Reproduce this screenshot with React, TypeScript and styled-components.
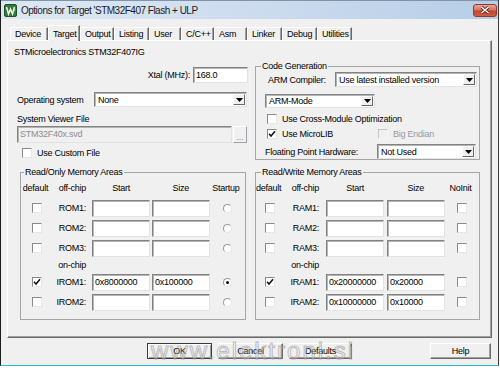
import React from 'react';
import styled, { createGlobalStyle } from 'styled-components';

const GlobalStyle = createGlobalStyle`
  html, body {
    margin: 0;
    padding: 0;
    background: #fff;
  }
  body {
    font-family: "Liberation Sans", Arial, sans-serif;
    font-size: 9px;
    letter-spacing: -0.25px;
    color: #000;
  }
`;

type MemRowData = {
  label: string;
  checked?: boolean;
  start?: string;
  size?: string;
  on?: boolean;
};

const romRows: MemRowData[] = [
  { label: 'ROM1:' },
  { label: 'ROM2:' },
  { label: 'ROM3:' },
];
const iromRows: MemRowData[] = [
  { label: 'IROM1:', checked: true, start: '0x8000000', size: '0x100000', on: true },
  { label: 'IROM2:' },
];
const ramRows: MemRowData[] = [
  { label: 'RAM1:' },
  { label: 'RAM2:' },
  { label: 'RAM3:' },
];
const iramRows: MemRowData[] = [
  { label: 'IRAM1:', checked: true, start: '0x20000000', size: '0x20000' },
  { label: 'IRAM2:', start: '0x10000000', size: '0x10000' },
];

const tabs = [
  { name: 'Device', w: 38 },
  { name: 'Target', w: 32, active: true },
  { name: 'Output', w: 34 },
  { name: 'Listing', w: 35 },
  { name: 'User', w: 32 },
  { name: 'C/C++', w: 33 },
  { name: 'Asm', w: 33 },
  { name: 'Linker', w: 35 },
  { name: 'Debug', w: 35 },
  { name: 'Utilities', w: 35 },
];

const CheckBox: React.FC<{ checked?: boolean; disabled?: boolean }> = ({ checked, disabled }) => (
  <Box $disabled={disabled}>
    {checked && (
      <svg width="8" height="8" viewBox="0 0 8 8">
        <path d="M1 3.8 L3 6 L7 1.2" stroke="#111" strokeWidth="1.5" fill="none" />
      </svg>
    )}
  </Box>
);

const Combo: React.FC<{ w: number; h?: number; value: string }> = ({ w, h, value }) => (
  <ComboBox $w={w} $h={h}>
    <ComboText>{value}</ComboText>
    <ComboArrow>
      <svg width="7" height="4" viewBox="0 0 7 4">
        <polygon points="0,0 7,0 3.5,4" fill="#000" />
      </svg>
    </ComboArrow>
  </ComboBox>
);

const MemGroup: React.FC<{
  title: string;
  cols: string;
  lastHead: string;
  top: MemRowData[];
  chip: MemRowData[];
  radio?: boolean;
  w: number;
  indent: number;
}> = ({ title, cols, lastHead, top, chip, radio, w, indent }) => {
  const renderRow = (r: MemRowData) => (
    <React.Fragment key={r.label}>
      <Center><CheckBox checked={r.checked} /></Center>
      <RowLabel>{r.label}</RowLabel>
      <End><TextBox $w={58} $h={17}>{r.start}</TextBox></End>
      <End><TextBox $w={58} $h={17}>{r.size}</TextBox></End>
      <Center>{radio ? <Radio $on={r.on} /> : <CheckBox />}</Center>
    </React.Fragment>
  );
  return (
    <GroupBox $w={w} $h={154}>
      <GroupTitle $indent={indent}>{title}</GroupTitle>
      <MemGrid $cols={cols}>
        <HeadCell>default</HeadCell>
        <HeadCell $align="right">off-chip</HeadCell>
        <HeadCell $align="right" $pad={20}>Start</HeadCell>
        <HeadCell $align="right" $pad={21}>Size</HeadCell>
        <HeadCell>{lastHead}</HeadCell>
        {top.map(renderRow)}
        <span />
        <RowLabel>on-chip</RowLabel>
        <span />
        <span />
        <span />
        {chip.map(renderRow)}
      </MemGrid>
    </GroupBox>
  );
};

export default function App() {
  return (
    <>
      <GlobalStyle />
      <Window>
        <TitleBar>
          <AppIcon>
            <svg width="13" height="13" viewBox="0 0 13 13">
              <rect x="0.5" y="0.5" width="12" height="12" rx="1.5" fill="#2f7d3a" stroke="#1d5425" />
              <path d="M2.5 3 L4.5 10 L6.5 5 L8.5 10 L10.5 3" stroke="#fff" strokeWidth="1.4" fill="none" />
              <path d="M7 7.5 L8.5 9 L11 5.5" stroke="#d8f0a0" strokeWidth="1" fill="none" />
            </svg>
          </AppIcon>
          <TitleText>Options for Target 'STM32F407 Flash + ULP</TitleText>
          <CloseButton>
            <svg width="10" height="8" viewBox="0 0 10 8">
              <path d="M1.5 1 L8.5 7 M8.5 1 L1.5 7" stroke="#5a1c12" strokeWidth="3" />
              <path d="M1.5 1 L8.5 7 M8.5 1 L1.5 7" stroke="#fff" strokeWidth="1.6" />
            </svg>
          </CloseButton>
        </TitleBar>

        <TabStrip>
          {tabs.map((t) => (
            <Tab key={t.name} $w={t.w} $active={t.active}>{t.name}</Tab>
          ))}
        </TabStrip>

        <Panel>
          <DeviceName>STMicroelectronics STM32F407IG</DeviceName>
          <Columns>
            <LeftCol>
              <Row $top={7} $h={16} $end>
                <Label $gap={3}>Xtal (MHz):</Label>
                <TextBox $w={55} $h={16}>168.0</TextBox>
              </Row>
              <Row $top={9} $h={15}>
                <Label $w={80} $indent={3}>Operating system</Label>
                <Combo w={153} value="None" />
              </Row>
              <Row $top={7} $h={10}>
                <Label $indent={3}>System Viewer File</Label>
              </Row>
              <Row $top={2} $h={17} $indent={3}>
                <TextBox $w={215} $h={17} $disabled>STM32F40x.svd</TextBox>
                <BrowseButton>...</BrowseButton>
              </Row>
              <Row $top={5} $h={10} $indent={8}>
                <CheckBox />
                <CheckLabel>Use Custom File</CheckLabel>
              </Row>
            </LeftCol>

            <GroupBox $w={225} $h={100}>
              <GroupTitle $indent={5}>Code Generation</GroupTitle>
              <Row $top={0} $h={15}>
                <Label $w={79} $indent={12}>ARM Compiler:</Label>
                <Combo w={142} value="Use latest installed version" />
              </Row>
              <Row $top={7} $h={14} $indent={9}>
                <Combo w={110} h={14} value="ARM-Mode" />
              </Row>
              <Row $top={6} $h={10} $indent={11}>
                <CheckBox />
                <CheckLabel>Use Cross-Module Optimization</CheckLabel>
              </Row>
              <Row $top={5} $h={10} $indent={11}>
                <CheckItem $w={111}>
                  <CheckBox checked />
                  <CheckLabel>Use MicroLIB</CheckLabel>
                </CheckItem>
                <CheckBox disabled />
                <CheckLabel $disabled>Big Endian</CheckLabel>
              </Row>
              <Row $top={5} $h={15}>
                <Label $w={121} $indent={9}>Floating Point Hardware:</Label>
                <Combo w={99} value="Not Used" />
              </Row>
            </GroupBox>
          </Columns>

          <MemRow>
            <MemGroup
              title="Read/Only Memory Areas"
              cols="32px 36px 61px 60px 1fr"
              lastHead="Startup"
              top={romRows}
              chip={iromRows}
              radio
              w={226}
              indent={3}
            />
            <MemGroup
              title="Read/Write Memory Areas"
              cols="27px 39px 62px 61px 1fr"
              lastHead="NoInit"
              top={ramRows}
              chip={iramRows}
              w={225}
              indent={5}
            />
          </MemRow>
        </Panel>

        <Footer>
          <DlgButton $w={65} $default>OK</DlgButton>
          <DlgButton $w={65} $left={6}>Cancel</DlgButton>
          <DlgButton $w={63} $left={6}>Defaults</DlgButton>
          <DlgButton $w={61} $push>Help</DlgButton>
          <Watermark>www.elektroni.si</Watermark>
        </Footer>
      </Window>
    </>
  );
}

const Window = styled.div`
  width: 499px;
  height: 366px;
  box-sizing: border-box;
  display: flex;
  flex-direction: column;
  background: #f0f0f0;
  border-left: 1px solid #1c1c1c;
  border-right: 1px solid #3a3a3a;
  border-bottom: 1px solid #27bcdc;
`;

const TitleBar = styled.div`
  height: 19px;
  box-sizing: border-box;
  display: flex;
  align-items: center;
  padding: 0 1px 0 3px;
  border-top: 1px solid #8293a8;
  background: linear-gradient(to right, #dde8f4 0%, #cbdbee 55%, #b7cde7 100%);
`;

const AppIcon = styled.span`
  display: flex;
  width: 13px;
  height: 13px;
`;

const TitleText = styled.span`
  margin-left: 4px;
  font-size: 10px;
  letter-spacing: -0.5px;
  color: #1b1b1b;
  white-space: nowrap;
`;

const CloseButton = styled.span`
  margin-left: auto;
  width: 24px;
  height: 13px;
  box-sizing: border-box;
  display: flex;
  align-items: center;
  justify-content: center;
  border: 1px solid #8e3b2f;
  border-radius: 3px;
  background: linear-gradient(#e9a898 0%, #d67362 45%, #c4452d 55%, #cf5c42 100%);
`;

const TabStrip = styled.div`
  display: flex;
  align-items: flex-end;
  height: 15px;
  margin-top: 6px;
  padding-left: 9px;
  position: relative;
  z-index: 1;
`;

const Tab = styled.div<{ $w: number; $active?: boolean }>`
  width: ${(p) => p.$w}px;
  height: ${(p) => (p.$active ? 16 : 13)}px;
  margin-bottom: ${(p) => (p.$active ? -1 : 0)}px;
  box-sizing: border-box;
  display: flex;
  align-items: center;
  padding-left: 4px;
  background: #f0f0f0;
  border-top: 1px solid #fff;
  border-left: 1px solid #fff;
  border-right: 1px solid #696969;
  box-shadow: inset -1px 0 0 #a0a0a0;
  white-space: nowrap;
`;

const Panel = styled.div`
  margin-left: 6px;
  width: 485px;
  height: 298px;
  box-sizing: border-box;
  padding: 5px 0 0 6px;
  border-top: 1px solid #fff;
  border-left: 1px solid #fff;
  border-right: 1px solid #696969;
  border-bottom: 1px solid #696969;
  box-shadow: inset -1px -1px 0 #a0a0a0;
`;

const DeviceName = styled.div`
  height: 12px;
  line-height: 12px;
  white-space: nowrap;
`;

const Columns = styled.div`
  display: flex;
  gap: 7px;
  margin-top: 2px;
`;

const LeftCol = styled.div`
  width: 234px;
  display: flex;
  flex-direction: column;
`;

const Row = styled.div<{ $top: number; $h: number; $indent?: number; $end?: boolean }>`
  display: flex;
  align-items: center;
  margin-top: ${(p) => p.$top}px;
  height: ${(p) => p.$h}px;
  padding-left: ${(p) => p.$indent ?? 0}px;
  justify-content: ${(p) => (p.$end ? 'flex-end' : 'flex-start')};
  white-space: nowrap;
`;

const Label = styled.span<{ $w?: number; $indent?: number; $gap?: number }>`
  ${(p) => (p.$w ? `width: ${p.$w}px; flex: none;` : '')}
  box-sizing: border-box;
  padding-left: ${(p) => p.$indent ?? 0}px;
  margin-right: ${(p) => p.$gap ?? 0}px;
  white-space: nowrap;
`;

const TextBox = styled.div<{ $w: number; $h: number; $disabled?: boolean }>`
  width: ${(p) => p.$w}px;
  height: ${(p) => p.$h}px;
  flex: none;
  box-sizing: border-box;
  display: flex;
  align-items: center;
  padding: 0 0 1px 2px;
  background: ${(p) => (p.$disabled ? '#f0f0f0' : '#fff')};
  color: ${(p) => (p.$disabled ? '#8d8d8d' : '#000')};
  border: 1px solid;
  border-color: #828282 #e3e3e3 #e3e3e3 #828282;
  box-shadow: inset 1px 1px 0 #b4b4b4;
  white-space: nowrap;
  overflow: hidden;
`;

const BrowseButton = styled.span`
  width: 14px;
  height: 17px;
  margin-left: 1px;
  box-sizing: border-box;
  display: flex;
  align-items: flex-end;
  justify-content: center;
  padding-bottom: 2px;
  color: #8d8d8d;
  background: #f0f0f0;
  border: 1px solid;
  border-color: #fff #a0a0a0 #a0a0a0 #fff;
  line-height: 6px;
`;

const ComboBox = styled.div<{ $w: number; $h?: number }>`
  width: ${(p) => p.$w}px;
  height: ${(p) => p.$h ?? 15}px;
  flex: none;
  box-sizing: border-box;
  display: flex;
  align-items: stretch;
  background: #fff;
  border: 1px solid;
  border-color: #828282 #e3e3e3 #e3e3e3 #828282;
  box-shadow: inset 1px 1px 0 #b4b4b4;
`;

const ComboText = styled.span`
  flex: 1;
  display: flex;
  align-items: center;
  padding-left: 3px;
  white-space: nowrap;
  overflow: hidden;
`;

const ComboArrow = styled.span`
  width: 12px;
  margin: 1px 1px 1px 0;
  box-sizing: border-box;
  display: flex;
  align-items: center;
  justify-content: center;
  background: #f0f0f0;
  border: 1px solid;
  border-color: #fff #696969 #696969 #fff;
`;

const Box = styled.span<{ $disabled?: boolean }>`
  width: 10px;
  height: 10px;
  flex: none;
  box-sizing: border-box;
  display: flex;
  align-items: center;
  justify-content: center;
  background: ${(p) => (p.$disabled ? '#f0f0f0' : '#fff')};
  border: 1px solid;
  border-color: ${(p) => (p.$disabled ? '#c8c8c8 #f6f6f6 #f6f6f6 #c8c8c8' : '#8a8a8a #e6e6e6 #e6e6e6 #8a8a8a')};
`;

const CheckLabel = styled.span<{ $disabled?: boolean }>`
  margin-left: 5px;
  color: ${(p) => (p.$disabled ? '#9a9a9a' : '#000')};
  white-space: nowrap;
`;

const CheckItem = styled.span<{ $w: number }>`
  width: ${(p) => p.$w}px;
  display: flex;
  align-items: center;
`;

const GroupBox = styled.fieldset<{ $w: number; $h: number }>`
  width: ${(p) => p.$w}px;
  height: ${(p) => p.$h}px;
  box-sizing: border-box;
  margin: 0;
  padding: 0;
  min-width: 0;
  border: 1px solid #a6a6a6;
  display: flex;
  flex-direction: column;
`;

const GroupTitle = styled.legend<{ $indent: number }>`
  margin-left: ${(p) => p.$indent}px;
  padding: 0 1px;
  height: 12px;
  line-height: 12px;
  white-space: nowrap;
`;

const MemRow = styled.div`
  display: flex;
  gap: 9px;
  margin-top: 6px;
  padding-left: 6px;
`;

const MemGrid = styled.div<{ $cols: string }>`
  display: grid;
  grid-template-columns: ${(p) => p.$cols};
  grid-template-rows: 19px 18px 18px 18px 12px 18px 18px;
  row-gap: 2px;
`;

const HeadCell = styled.span<{ $align?: string; $pad?: number }>`
  align-self: center;
  text-align: ${(p) => p.$align ?? 'center'};
  padding-right: ${(p) => p.$pad ?? 3}px;
  white-space: nowrap;
`;

const RowLabel = styled.span`
  align-self: center;
  text-align: right;
  padding-right: 3px;
  white-space: nowrap;
`;

const Center = styled.span`
  display: flex;
  align-items: center;
  justify-content: center;
`;

const End = styled.span`
  display: flex;
  align-items: center;
  justify-content: flex-end;
`;

const Radio = styled.span<{ $on?: boolean }>`
  width: 9px;
  height: 9px;
  box-sizing: border-box;
  border-radius: 50%;
  background: #fff;
  border: 1px solid;
  border-color: #9a9a9a #e6e6e6 #e6e6e6 #9a9a9a;
  display: flex;
  align-items: center;
  justify-content: center;
  &::after {
    content: '';
    width: 3px;
    height: 3px;
    border-radius: 50%;
    background: ${(p) => (p.$on ? '#000' : 'transparent')};
  }
`;

const Footer = styled.div`
  position: relative;
  display: flex;
  align-items: center;
  height: 16px;
  margin-top: 5px;
  padding: 0 7px 0 146px;
`;

const DlgButton = styled.span<{ $w: number; $left?: number; $push?: boolean; $default?: boolean }>`
  width: ${(p) => p.$w}px;
  height: 16px;
  margin-left: ${(p) => (p.$push ? 'auto' : `${p.$left ?? 0}px`)};
  box-sizing: border-box;
  display: flex;
  align-items: center;
  justify-content: center;
  background: #f0f0f0;
  border: 1px solid;
  border-color: ${(p) => (p.$default ? '#3a3a3a' : '#fff #696969 #696969 #fff')};
  box-shadow: ${(p) => (p.$default ? 'inset 1px 1px 0 #fff, inset -1px -1px 0 #a0a0a0' : 'inset -1px -1px 0 #a0a0a0')};
`;

const Watermark = styled.span`
  position: absolute;
  left: 150px;
  top: -6px;
  font-size: 24px;
  letter-spacing: 2px;
  color: rgba(255, 255, 255, 0.3);
  -webkit-text-stroke: 1px rgba(130, 130, 130, 0.5);
  white-space: nowrap;
  pointer-events: none;
`;
